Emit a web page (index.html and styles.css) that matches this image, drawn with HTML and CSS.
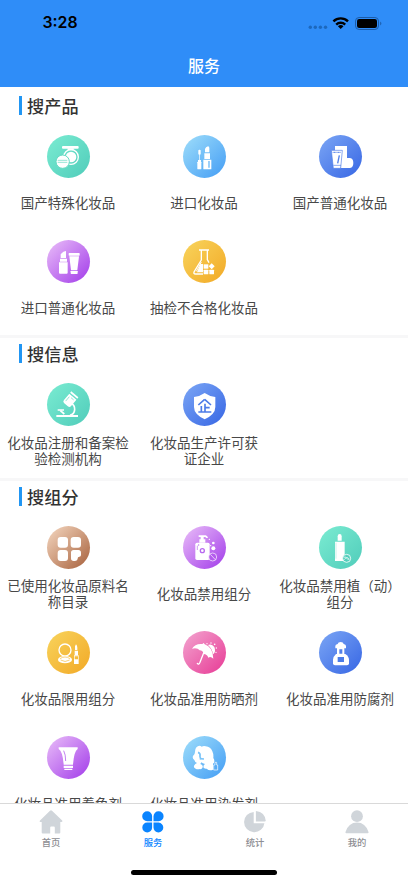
FILE: index.html
```html
<!DOCTYPE html>
<html lang="zh-CN">
<head>
<meta charset="utf-8">
<meta name="viewport" content="width=device-width, initial-scale=1">
<title>服务</title>
<link rel="stylesheet" href="styles.css">
</head>
<body>
<div class="app">
  <header class="header">
    <div class="status">
      <span class="time">3:28</span>
      <svg class="status-icons" width="76" height="16" viewBox="0 0 76 16">
        <g fill="#1c68bd"><circle cx="3.3" cy="12.2" r="1.7"/><circle cx="8.3" cy="12.2" r="1.7"/><circle cx="13.4" cy="12.2" r="1.7"/><circle cx="18.5" cy="12.2" r="1.7"/></g>
        <g fill="none" stroke="#000" stroke-width="2.4"><path d="M26.4 6.300a10.500 10.500 0 0 1 14.600 0M29.200 9.600a6.500 6.500 0 0 1 9 0"/></g>
        <path d="M30.900 11.300a4.100 4.100 0 0 1 5.600 0L33.700 14z"/>
        <rect x="48.500" y="2.500" width="23" height="12" rx="3.600" fill="none" stroke="#1c5ca9"/>
        <rect x="50" y="4" width="20" height="9" rx="2.200"/>
        <path d="M73.200 6.500q2.400 2 0 4z" fill="#1c5ca9"/>
      </svg>
    </div>
    <h1 class="title">服务</h1>
  </header>

  <main class="content">
    <section class="section">
      <h2 class="heading">搜产品</h2>
      <div class="grid">
        <a class="item">
          <svg class="icon teal" viewBox="0 0 129 129">
            <rect x="45" y="33" width="50" height="8" rx="3" fill="#fff"/><path d="M62 40h18v6H62z" fill="#fff"/>
            <circle cx="72" cy="66" r="22" fill="none" stroke="#fff" stroke-width="4"/><circle cx="72" cy="66" r="16" fill="#fff"/>
            <circle cx="47" cy="80" r="20" fill="#fff" stroke="#63d9c1" stroke-width="3"/>
            <path d="M32 76h29M32 82h29" stroke="#63d9c1" stroke-width="2"/>
          </svg>
          <span class="label">国产特殊化妆品</span>
        </a>
        <a class="item">
          <svg class="icon sky" viewBox="0 0 129 129" fill="#fff">
            <rect x="46" y="44" width="7" height="15" rx="3"/><path d="M48.500 58h2v18h-2zM45 75h9v6h-9z"/><rect x="43" y="80" width="12" height="23" rx="2"/>
            <path d="M66 52V42q2-6 9-8 4 0 4 5v13zM64 55h17v17H64zM61 74h24v29H61z"/><path d="M76 78h4v20h-4z" fill="#6bb8f6"/>
          </svg>
          <span class="label">进口化妆品</span>
        </a>
        <a class="item">
          <svg class="icon blue" viewBox="0 0 129 129" fill="#fff">
            <path d="M48 33h36v36h7q12 0 12 15t-12 15H66V48H48z"/>
            <path d="M37 46h33l-5 54H43z" stroke="#507fe9" stroke-width="2"/><path d="M41 52h25" stroke="#507fe9" stroke-width="3" stroke-dasharray="3 1"/><path d="M61 61l-5 24" stroke="#507fe9" stroke-width="4"/><path d="M43 91h23" stroke="#507fe9" stroke-width="2"/>
          </svg>
          <span class="label">国产普通化妆品</span>
        </a>
        <a class="item">
          <svg class="icon purple" viewBox="0 0 129 129" fill="#fff">
            <path d="M41 54V43q8-10 16-10v21zM39 56h21v9H39zM36 67h26v31q0 3-3 3H39q-3 0-3-3z"/>
            <rect x="65" y="39" width="33" height="8" rx="2"/><path d="M67 49h29l-5 41H72z"/><rect x="71" y="92" width="21" height="10" rx="2"/>
          </svg>
          <span class="label">进口普通化妆品</span>
        </a>
        <a class="item">
          <svg class="icon gold" viewBox="0 0 129 129" fill="none" stroke="#fff" stroke-width="4" stroke-linejoin="round">
            <path d="M48 30h30M55 31v29L34 94q-4 8 4 8h22M73 31v28l5 9"/><path d="M52 72L42 97h18V72z" fill="#fff" stroke="none"/>
            <path d="M55 66L40 94" stroke-width="3"/>
            <g fill="#fff" stroke="none"><rect x="62" y="73" width="14" height="13"/><path d="M86 70l9 9-9 9-9-9z"/><rect x="62" y="89" width="14" height="14" rx="2"/><rect x="79" y="89" width="14" height="14" rx="2"/></g>
          </svg>
          <span class="label">抽检不合格化妆品</span>
        </a>
      </div>
    </section>

    <section class="section">
      <h2 class="heading">搜信息</h2>
      <div class="grid">
        <a class="item">
          <svg class="icon teal" viewBox="0 0 129 129" fill="none" stroke="#fff">
            <g transform="rotate(40 67 49)"><rect x="56" y="27" width="28" height="5" fill="#fff" stroke="none"/><path d="M56 36h28v25q0 7-7 7H63q-7 0-7-7z" fill="#fff" stroke="none"/><path d="M62 43v17M68 42h10" stroke="#68dbc4" stroke-width="2"/></g>
            <path d="M71 59q13 7 12 21-1 14-14 17" stroke-width="5"/><path d="M32 81h19" stroke-width="5"/><path d="M40 83l12 10" stroke-width="5"/><path d="M28 99h65" stroke-width="6"/>
          </svg>
          <span class="label">化妆品注册和备案检<br>验检测机构</span>
        </a>
        <a class="item">
          <svg class="icon blue" viewBox="0 0 129 129">
            <path d="M65 30q14 10 32 12v30q0 22-32 37Q33 94 33 72V42q18-2 32-12z" fill="#fff"/>
            <path d="M65 49L46 66M65 49l19 17M66 62v25M55 69v17M66 74h14M46 87h39" fill="none" stroke="#4d7ce8" stroke-width="5"/>
          </svg>
          <span class="label">化妆品生产许可获<br>证企业</span>
        </a>
      </div>
    </section>

    <section class="section">
      <h2 class="heading">搜组分</h2>
      <div class="grid">
        <a class="item">
          <svg class="icon brown" viewBox="0 0 129 129" fill="#fff">
            <rect x="32" y="33" width="31" height="32" rx="9"/><rect x="71" y="33" width="31" height="32" rx="9"/><rect x="32" y="72" width="31" height="33" rx="9"/>
            <path d="M80 72h14q8 0 8 8v7q0 5-5 5-5 0-5 5v2q-2 6-8 6h-4q-8 0-8-8V80q0-8 8-8z"/>
          </svg>
          <span class="label">已使用化妆品原料名<br>称目录</span>
        </a>
        <a class="item">
          <svg class="icon purple" viewBox="0 0 129 129" fill="#fff">
            <path d="M47 28h21q6 2 7 8h-5q-1-3-5-3h-3v7h-9v-7h-6zM49 40h18v10H49z"/><rect x="37" y="50" width="43" height="52" rx="5"/>
            <circle cx="58" cy="74" r="6" fill="none" stroke="#b768ef" stroke-width="4"/><path d="M43 59v13M47 54v6" stroke="#b768ef" stroke-width="2"/>
            <circle cx="91" cy="51" r="4"/><circle cx="79" cy="40" r="2"/><circle cx="91" cy="67" r="6"/><circle cx="83" cy="59" r="2"/>
            <circle cx="89" cy="93" r="12" fill="#b45bed" stroke="#fff" stroke-width="2"/><path d="M82 85l15 16" stroke="#fff" stroke-width="2"/>
          </svg>
          <span class="label">化妆品禁用组分</span>
        </a>
        <a class="item">
          <svg class="icon teal" viewBox="0 0 129 129" fill="#fff">
            <path d="M56 44V31q0-7 6-7t6 7v13z"/><path d="M48 47h29v58H48z"/><path d="M51 50v48" stroke="#63d9c1" stroke-width="1"/>
            <circle cx="83" cy="97" r="12" fill="#52cfbc" stroke="#fff" stroke-width="2.500"/><path d="M75 94q5-4 8 3 3 7 8 0M76 101l7-8M84 93l6 8" fill="none" stroke="#fff" stroke-width="2"/>
          </svg>
          <span class="label">化妆品禁用植（动）<br>组分</span>
        </a>
        <a class="item">
          <svg class="icon gold" viewBox="0 0 129 129" fill="#fff">
            <circle cx="54" cy="57" r="18" fill="none" stroke="#fff" stroke-width="4"/><ellipse cx="54" cy="86" rx="21" ry="11"/><path d="M39 83q15-10 30 0M41 87q13 9 27 0" fill="none" stroke="#f5bb3c" stroke-width="2"/>
            <path d="M84 57V46l3-6q4 4 4 10v7zM83 59h10v13H83zM81 73h14v26H81z"/><path d="M83 76h10v9H83z" fill="#f5bb3c"/>
          </svg>
          <span class="label">化妆品限用组分</span>
        </a>
        <a class="item">
          <svg class="icon pink" viewBox="0 0 129 129" fill="#fff">
            <path d="M27 53q9-16 31-14l4-3 3 4q25 8 26 43-8-8-15-3-4-11-14-11-2-11-12-11-7-9-23-5z"/>
            <path d="M64 61L51 94q-4 9-8 3" fill="none" stroke="#fff" stroke-width="4" stroke-linecap="round"/>
            <path d="M75 42q11-5 19 6 6 15-4 22-2-17-15-28z"/><g><circle cx="72" cy="38" r="2"/><circle cx="84" cy="36" r="2"/><circle cx="95" cy="40" r="2.500"/><circle cx="100" cy="51" r="2"/><circle cx="99" cy="64" r="2"/></g>
          </svg>
          <span class="label">化妆品准用防晒剂</span>
        </a>
        <a class="item">
          <svg class="icon blue" viewBox="0 0 129 129" fill="#fff">
            <path d="M56 39q1-6 9-6t9 6q7 1 7 6v7H49v-7q0-5 7-6zM54 52h22v18H54z"/><path d="M61 55h9v13h-9z" fill="#5280e9"/>
            <path d="M51 69h28q11 8 11 17v11q0 6-6 6H48q-6 0-6-6V86q0-9 9-17z"/><path d="M56 78h19v15H56z" fill="#4b7ce8"/>
          </svg>
          <span class="label">化妆品准用防腐剂</span>
        </a>
        <a class="item">
          <svg class="icon purple" viewBox="0 0 129 129" fill="#fff">
            <path d="M35 34h57v5q-11 7-14 47H50q-3-40-15-47z"/><path d="M50 89h28v7H50zM52 98h24v4H52z"/><path d="M50 44q6 11 6 31" fill="none" stroke="#c281f0" stroke-width="3"/>
          </svg>
          <span class="label">化妆品准用着色剂</span>
        </a>
        <a class="item">
          <svg class="icon sky" viewBox="0 0 129 129" fill="#fff">
            <path d="M39 35q9-9 17-3 6-3 12-1 15 1 20 15 4 8 3 20 5 8 2 14l-3 3v18q-11 5-19-3-8 1-10-4 0-7 5-10-7-1-11-5l-3 5q9 3 7 10-2 7-8 5-8 2-13-1-8-3-4-10 2-5 8-7-6-2-8-9-7-5-4-12 6-5 6-12 0-8 3-13z"/>
            <path d="M45 49q8 2 6 13l3 9M50 68l13 1" fill="none" stroke="#7ac4f8" stroke-width="5"/>
            <path d="M92 87h4v-8h5v8h3v15H92z" fill="#59acf5" stroke="#fff" stroke-width="2"/>
          </svg>
          <span class="label">化妆品准用染发剂</span>
        </a>
      </div>
    </section>
  </main>

  <footer class="footer">
    <nav class="tabs">
      <a class="tab">
        <svg class="tab-icon" viewBox="0 0 24 24"><path d="M11 .8q1-1 2 0l10.200 9.700q.8 1.500-1 1.500h-.9v10.500q0 1-1 1h-4.500v-6q0-1-1-1h-2.600q-1 0-1 1v6H3.700q-1 0-1-1V12h-1q-1.600 0-.7-1.500z"/></svg>
        <span>首页</span>
      </a>
      <a class="tab active">
        <svg class="tab-icon" viewBox="0 0 24 24"><path d="M6.200 1.200a4.900 4.900 0 0 1 4.900 4.900V11.200H6.200a5 5 0 0 1 0-10zM17.600 1.200a5 5 0 0 1 0 10H12.500V6.200a5 5 0 0 1 5.100-5zM6.200 12.600H11.100V17.500a4.900 4.900 0 1 1-4.900-4.900zM12.500 12.600H17.600a4.900 4.900 0 1 1-5.100 4.900z"/></svg>
        <span>服务</span>
      </a>
      <a class="tab">
        <svg class="tab-icon" viewBox="0 0 24 24"><path d="M10.700 1.900a10.200 10.200 0 1 0 10.700 11.300H10.700zM12.900 1q9.200 1 9.900 10.100l-1 .3h-8.900z"/></svg>
        <span>统计</span>
      </a>
      <a class="tab">
        <svg class="tab-icon" viewBox="0 0 24 24"><circle cx="12" cy="6.200" r="5.900"/><path d="M.4 22.200Q3.600 12.600 12 12.600T23.600 22.200q0 1-1 1H1.400q-1 0-1-1z"/></svg>
        <span>我的</span>
      </a>
    </nav>
    <div class="home-bar"></div>
  </footer>
</div>
</body>
</html>
```
FILE: styles.css
```css
* { box-sizing: border-box; }

body {
  margin: 0;
  background: #fff;
  color: #484848;
  font-family: "Noto Sans CJK SC", sans-serif;
}

.app {
  display: flex;
  flex-direction: column;
  width: 408px;
  height: 883px;
  overflow: hidden;
}

.header {
  flex: none;
  height: 87px;
  background: #2f8df8;
}

.status {
  display: flex;
  justify-content: space-between;
  align-items: center;
  height: 46px;
  padding: 0 25px 0 42.500px;
}

.time {
  color: #000;
  font: 600 15.800px/20px Inter, sans-serif;
}

.status-icons { display: block; }

.title {
  margin: 0;
  padding-top: 7px;
  color: #fff;
  font-size: 16px;
  font-weight: 500;
  line-height: 24px;
  text-align: center;
}

.content {
  flex: 1;
  min-height: 0;
  overflow: hidden;
}

.section + .section { border-top: 3px solid #f7f7f8; }
.section + .section .heading { height: 35px; padding-top: 6px; }

.heading {
  display: flex;
  gap: 5px;
  height: 38px;
  margin: 0;
  padding: 9px 0 0 19px;
  color: #333;
  font-size: 17.200px;
  font-weight: 500;
  line-height: 19px;
}

.heading::before {
  content: "";
  width: 3px;
  height: 19px;
  background: #2196f3;
}

.grid {
  display: grid;
  grid-template-columns: repeat(3, 136px);
  grid-auto-rows: 105px;
}

.item {
  display: flex;
  flex-direction: column;
  align-items: center;
  gap: 8px;
  padding-top: 9.500px;
}

.icon {
  flex: none;
  width: 43px;
  height: 43px;
  border-radius: 50%;
}

.teal { background: linear-gradient(135deg, #7becd2, #50ccba); }
.sky { background: linear-gradient(135deg, #9bdbfa 5%, #4ca3f5 90%); }
.blue { background: linear-gradient(135deg, #78a3f4 5%, #3a69e5 95%); }
.purple { background: linear-gradient(135deg, #e4b4f7 8%, #a541ea 95%); }
.gold { background: linear-gradient(135deg, #f8d45d, #f2a926); }
.pink { background: linear-gradient(135deg, #f2a0cd 5%, #e83f98 95%); }
.brown { background: linear-gradient(135deg, #efcfb7 8%, #ac6844 93%); }

.label {
  display: flex;
  flex-direction: column;
  justify-content: center;
  height: 32px;
  font-size: 13.500px;
  line-height: 16px;
  text-align: center;
  white-space: nowrap;
}

.label:has(br) { display: block; }

.footer {
  flex: none;
  height: 80px;
  border-top: 1px solid #d9d9d9;
  background: #fff;
}

.tabs {
  display: grid;
  grid-template-columns: repeat(4, 1fr);
  height: 66px;
}

.tab {
  display: flex;
  flex-direction: column;
  align-items: center;
  gap: 1px;
  padding-top: 6px;
  color: #8e8e93;
  font-size: 9.300px;
  font-weight: 500;
  line-height: 14px;
}

.tab-icon {
  width: 24px;
  height: 24px;
  fill: #d0d5da;
}

.active { color: #0a84ff; }
.active .tab-icon { fill: #0a84ff; }

.home-bar {
  width: 146px;
  height: 5px;
  margin: 0 auto;
  border-radius: 3px;
  background: #000;
}
```
